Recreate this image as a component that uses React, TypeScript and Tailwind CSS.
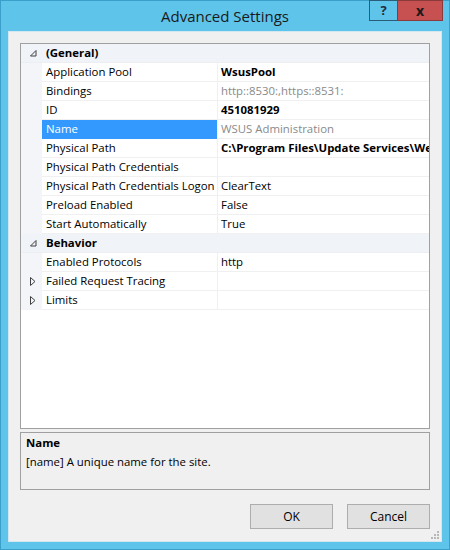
import React from 'react';

type Row =
    | { kind: 'cat'; label: string; open: boolean }
    | { kind: 'prop'; label: string; value?: string; bold?: boolean; dim?: boolean; selected?: boolean; collapsed?: boolean };

const rows: Row[] = [
    { kind: 'cat', label: '(General)', open: true },
    { kind: 'prop', label: 'Application Pool', value: 'WsusPool', bold: true },
    { kind: 'prop', label: 'Bindings', value: 'http::8530:,https::8531:', dim: true },
    { kind: 'prop', label: 'ID', value: '451081929', bold: true },
    { kind: 'prop', label: 'Name', value: 'WSUS Administration', dim: true, selected: true },
    { kind: 'prop', label: 'Physical Path', value: 'C:\\Program Files\\Update Services\\WebServices\\Root', bold: true },
    { kind: 'prop', label: 'Physical Path Credentials', value: '' },
    { kind: 'prop', label: 'Physical Path Credentials Logon', value: 'ClearText' },
    { kind: 'prop', label: 'Preload Enabled', value: 'False' },
    { kind: 'prop', label: 'Start Automatically', value: 'True' },
    { kind: 'cat', label: 'Behavior', open: true },
    { kind: 'prop', label: 'Enabled Protocols', value: 'http' },
    { kind: 'prop', label: 'Failed Request Tracing', value: '', collapsed: true },
    { kind: 'prop', label: 'Limits', value: '', collapsed: true },
];

const OpenArrow = () => (
    <svg width="7" height="7" viewBox="0 0 7 7" className="block">
        <path d="M6 0.5 L6 6 L0.5 6 Z" fill="none" stroke="#404040" strokeWidth="1" />
    </svg>
);

const ClosedArrow = () => (
    <svg width="6" height="9" viewBox="0 0 6 9" className="block">
        <path d="M0.5 0.5 L5 4.5 L0.5 8.5 Z" fill="none" stroke="#404040" strokeWidth="1" />
    </svg>
);

const GridRow = ({ row }: { row: Row }) => {
    if (row.kind === 'cat') {
        return (
            <div className="flex h-[19px] items-center bg-[#f0f3f8] border-b border-[#eceef2]">
                <div className="flex w-[21px] shrink-0 justify-center pl-[4px]">{row.open && <OpenArrow />}</div>
                <div className="pl-[4px] font-bold">{row.label}</div>
            </div>
        );
    }
    return (
        <div className="flex h-[19px]">
            <div className="flex w-[21px] shrink-0 items-center justify-center bg-[#f3f5f9] pl-[3px]">
                {row.collapsed && <ClosedArrow />}
            </div>
            <div
                className={
                    'flex w-[175px] shrink-0 items-center whitespace-nowrap overflow-hidden pl-[4px] border-b ' +
                    (row.selected ? 'bg-[#3399ff] text-white border-[#3399ff]' : 'border-[#f0f0f0] text-black')
                }
            >
                {row.label}
            </div>
            <div className="w-px shrink-0 bg-[#f0f0f0]" />
            <div
                className={
                    'flex flex-1 min-w-0 items-center whitespace-nowrap overflow-hidden pl-[3px] border-b border-[#f0f0f0] ' +
                    (row.bold ? 'font-bold text-black ' : '') +
                    (row.dim ? 'text-[#8a8a8a]' : 'text-black')
                }
            >
                {row.value}
            </div>
        </div>
    );
};

export default function App() {
    return (
        <div
            className="w-[450px] h-[550px] bg-[#5fc4e9] border border-[#3c9fca] flex flex-col text-[11.4px] text-black"
            style={{ fontFamily: '"Open Sans", "Noto Sans", sans-serif' }}
        >
            {/* title bar */}
            <div className="relative h-[30px] shrink-0 flex items-center justify-center">
                <span className="text-[15px] text-[#1a1a1a] mt-[1px]">Advanced Settings</span>
                <div className="absolute right-[6px] top-[-1px] flex h-[21px]">
                    <div className="w-[28px] h-full flex items-center justify-center border border-[#2b5d78] border-r-0 text-[13px] font-bold text-[#1f2d3a]">
                        ?
                    </div>
                    <div className="w-[46px] h-full flex items-center justify-center bg-[#c75050] border border-[#8a3a3a] text-[14px] font-bold text-[#1a1a1a]">
                        x
                    </div>
                </div>
            </div>

            {/* client area */}
            <div className="mx-[7px] h-[511px] bg-[#f0f0f0] border border-[#d4e6ef] flex flex-col px-[11px] pt-[11px] relative">
                <div className="h-[386px] shrink-0 bg-white border border-[#a0a0a0] overflow-hidden">
                    {rows.map((r) => (
                        <GridRow key={r.label} row={r} />
                    ))}
                </div>

                <div className="mt-[3px] h-[58px] shrink-0 border border-[#a0a0a0] bg-[#f0f0f0] px-[5px] pt-[0px] leading-[19px]">
                    <div className="font-bold">Name</div>
                    <div>[name] A unique name for the site.</div>
                </div>

                <div className="mt-[14px] flex justify-end gap-[14px]">
                    <button className="w-[83px] h-[25px] bg-[#e1e1e1] border border-[#adadad] text-[12px]">OK</button>
                    <button className="w-[83px] h-[25px] bg-[#e1e1e1] border border-[#adadad] text-[12px]">Cancel</button>
                </div>

                {/* size grip */}
                <div className="absolute right-[2px] bottom-[2px] grid grid-cols-3 gap-[1px]">
                    {[0, 0, 1, 0, 1, 1, 1, 1, 1].map((v, i) => (
                        <div key={i} className={'w-[2px] h-[2px] ' + (v ? 'bg-[#b8b8b8]' : 'bg-transparent')} />
                    ))}
                </div>
            </div>
        </div>
    );
}
